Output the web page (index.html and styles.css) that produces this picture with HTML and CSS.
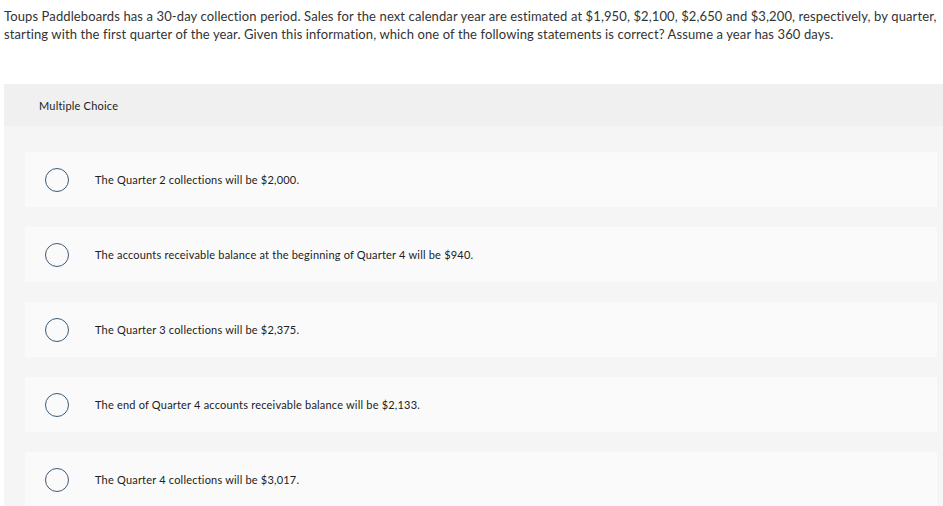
FILE: index.html
```html
<!DOCTYPE html>
<html>
<head>
<meta charset="utf-8">
<link rel="stylesheet" href="styles.css">
</head>
<body>
<p class="question">Toups Paddleboards has a 30-day collection period. Sales for the next calendar year are estimated at $1,950, $2,100, $2,650 and $3,200, respectively, by quarter, starting with the first quarter of the year. Given this information, which one of the following statements is correct? Assume a year has 360 days.</p>
<div class="panel">
  <div class="panel-head">Multiple Choice</div>
  <div class="choices">
    <div class="choice"><span class="radio"></span><span class="label">The Quarter 2 collections will be $2,000.</span></div>
    <div class="choice"><span class="radio"></span><span class="label">The accounts receivable balance at the beginning of Quarter 4 will be $940.</span></div>
    <div class="choice"><span class="radio"></span><span class="label">The Quarter 3 collections will be $2,375.</span></div>
    <div class="choice"><span class="radio"></span><span class="label">The end of Quarter 4 accounts receivable balance will be $2,133.</span></div>
    <div class="choice"><span class="radio"></span><span class="label">The Quarter 4 collections will be $3,017.</span></div>
  </div>
</div>
</body>
</html>
```
FILE: styles.css
```css
html, body {
  margin: 0;
  padding: 0;
  background: #ffffff;
}
body {
  font-family: Lato, "Open Sans", sans-serif;
  color: #2b2b2b;
  overflow: hidden;
}
.question {
  margin: 0;
  padding: 7px 0 0 4px;
  font-size: 13px;
  line-height: 18px;
  letter-spacing: 0.11px;
  width: 937px;
  color: #333;
}
.panel {
  margin: 41px 0 0 4px;
  background: #f5f5f5;
  width: 939px;
}
.panel-head {
  height: 42px;
  background: #f0f0f0;
  padding-left: 35px;
  display: flex;
  align-items: center;
  font-size: 11px;
  letter-spacing: 0.2px;
  color: #222;
}
.choices {
  padding: 26px 6px 0 21px;
  display: flex;
  flex-direction: column;
  gap: 20px;
}
.choice {
  height: 55px;
  background: #fafafa;
  display: flex;
  align-items: center;
}
.radio {
  width: 22px;
  height: 22px;
  border: 1px solid #3d5a78;
  border-radius: 50%;
  margin-left: 20px;
  flex: none;
}
.label {
  margin-left: 26px;
  font-size: 11px;
  letter-spacing: 0.2px;
  color: #222;
}
```
